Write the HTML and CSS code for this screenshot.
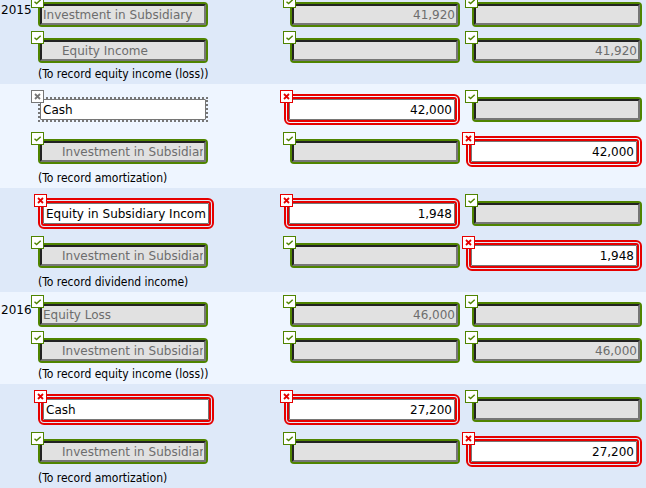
FILE: index.html
```html
<!DOCTYPE html>
<html lang="en">
<head>
  <meta charset="UTF-8" />
  <meta name="viewport" content="width=device-width, initial-scale=1.0" />
  <title>Journal Entries</title>
  <link rel="stylesheet" href="styles.css">
</head>
<body>
  <svg class="icons" aria-hidden="true">
    <symbol id="check" viewBox="0 0 11 11"><path d="M2.5 5.7 L4.6 7.6 L8.7 3.7" fill="none" stroke="currentColor" stroke-width="1.4" /></symbol>
    <symbol id="cross" viewBox="0 0 11 11"><path d="M3 3 L8 8 M8 3 L3 8" fill="none" stroke="currentColor" stroke-width="1.8" /></symbol>
  </svg>

  <table class="journal">
    <colgroup>
      <col class="col-year">
      <col class="col-account">
      <col class="col-amount">
      <col class="col-amount">
    </colgroup>

    <!-- 2015 -->
    <tbody>
      <tr>
        <th scope="row">2015</th>
        <td><span class="field right"><svg class="badge"><use href="#check" /></svg><input type="text" aria-label="Account" value="Investment in Subsidiary" disabled></span></td>
        <td class="amount"><span class="field right"><svg class="badge"><use href="#check" /></svg><input type="text" aria-label="Debit" value="41,920" disabled></span></td>
        <td class="amount"><span class="field right"><svg class="badge"><use href="#check" /></svg><input type="text" aria-label="Credit" disabled></span></td>
      </tr>
      <tr>
        <th></th>
        <td class="indent"><span class="field right"><svg class="badge"><use href="#check" /></svg><input type="text" aria-label="Account" value="Equity Income" disabled></span></td>
        <td class="amount"><span class="field right"><svg class="badge"><use href="#check" /></svg><input type="text" aria-label="Debit" disabled></span></td>
        <td class="amount"><span class="field right"><svg class="badge"><use href="#check" /></svg><input type="text" aria-label="Credit" value="41,920" disabled></span></td>
      </tr>
      <tr class="note">
        <th></th>
        <td colspan="3">(To record equity income (loss))</td>
      </tr>
    </tbody>

    <tbody>
      <tr>
        <th></th>
        <td><span class="field active"><svg class="badge"><use href="#cross" /></svg><input type="text" aria-label="Account" value="Cash"></span></td>
        <td class="amount"><span class="field wrong"><svg class="badge"><use href="#cross" /></svg><input type="text" aria-label="Debit" value="42,000"></span></td>
        <td class="amount"><span class="field right"><svg class="badge"><use href="#check" /></svg><input type="text" aria-label="Credit" disabled></span></td>
      </tr>
      <tr>
        <th></th>
        <td class="indent"><span class="field right"><svg class="badge"><use href="#check" /></svg><input type="text" aria-label="Account" value="Investment in Subsidiary" disabled></span></td>
        <td class="amount"><span class="field right"><svg class="badge"><use href="#check" /></svg><input type="text" aria-label="Debit" disabled></span></td>
        <td class="amount"><span class="field wrong"><svg class="badge"><use href="#cross" /></svg><input type="text" aria-label="Credit" value="42,000"></span></td>
      </tr>
      <tr class="note">
        <th></th>
        <td colspan="3">(To record amortization)</td>
      </tr>
    </tbody>

    <tbody>
      <tr>
        <th></th>
        <td><span class="field wrong"><svg class="badge"><use href="#cross" /></svg><input type="text" aria-label="Account" value="Equity in Subsidiary Income"></span></td>
        <td class="amount"><span class="field wrong"><svg class="badge"><use href="#cross" /></svg><input type="text" aria-label="Debit" value="1,948"></span></td>
        <td class="amount"><span class="field right"><svg class="badge"><use href="#check" /></svg><input type="text" aria-label="Credit" disabled></span></td>
      </tr>
      <tr>
        <th></th>
        <td class="indent"><span class="field right"><svg class="badge"><use href="#check" /></svg><input type="text" aria-label="Account" value="Investment in Subsidiary" disabled></span></td>
        <td class="amount"><span class="field right"><svg class="badge"><use href="#check" /></svg><input type="text" aria-label="Debit" disabled></span></td>
        <td class="amount"><span class="field wrong"><svg class="badge"><use href="#cross" /></svg><input type="text" aria-label="Credit" value="1,948"></span></td>
      </tr>
      <tr class="note">
        <th></th>
        <td colspan="3">(To record dividend income)</td>
      </tr>
    </tbody>

    <!-- 2016 -->
    <tbody>
      <tr>
        <th scope="row">2016</th>
        <td><span class="field right"><svg class="badge"><use href="#check" /></svg><input type="text" aria-label="Account" value="Equity Loss" disabled></span></td>
        <td class="amount"><span class="field right"><svg class="badge"><use href="#check" /></svg><input type="text" aria-label="Debit" value="46,000" disabled></span></td>
        <td class="amount"><span class="field right"><svg class="badge"><use href="#check" /></svg><input type="text" aria-label="Credit" disabled></span></td>
      </tr>
      <tr>
        <th></th>
        <td class="indent"><span class="field right"><svg class="badge"><use href="#check" /></svg><input type="text" aria-label="Account" value="Investment in Subsidiary" disabled></span></td>
        <td class="amount"><span class="field right"><svg class="badge"><use href="#check" /></svg><input type="text" aria-label="Debit" disabled></span></td>
        <td class="amount"><span class="field right"><svg class="badge"><use href="#check" /></svg><input type="text" aria-label="Credit" value="46,000" disabled></span></td>
      </tr>
      <tr class="note">
        <th></th>
        <td colspan="3">(To record equity income (loss))</td>
      </tr>
    </tbody>

    <tbody>
      <tr>
        <th></th>
        <td><span class="field wrong"><svg class="badge"><use href="#cross" /></svg><input type="text" aria-label="Account" value="Cash"></span></td>
        <td class="amount"><span class="field wrong"><svg class="badge"><use href="#cross" /></svg><input type="text" aria-label="Debit" value="27,200"></span></td>
        <td class="amount"><span class="field right"><svg class="badge"><use href="#check" /></svg><input type="text" aria-label="Credit" disabled></span></td>
      </tr>
      <tr>
        <th></th>
        <td class="indent"><span class="field right"><svg class="badge"><use href="#check" /></svg><input type="text" aria-label="Account" value="Investment in Subsidiary" disabled></span></td>
        <td class="amount"><span class="field right"><svg class="badge"><use href="#check" /></svg><input type="text" aria-label="Debit" disabled></span></td>
        <td class="amount"><span class="field wrong"><svg class="badge"><use href="#cross" /></svg><input type="text" aria-label="Credit" value="27,200"></span></td>
      </tr>
      <tr class="note">
        <th></th>
        <td colspan="3">(To record amortization)</td>
      </tr>
    </tbody>
  </table>
</body>
</html>
```
FILE: styles.css
```css
:root {
  --band-dark: #dee9f9;
  --band-light: #eef5ff;
  --right-color: #4f8400;
  --wrong-color: #e60000;
  --gray: #767676;
}

* {
  box-sizing: border-box;
}

body {
  margin: 0;
  font-family: "DejaVu Sans", Verdana, sans-serif;
  font-size: 12px;
  color: #000;
  overflow: hidden;
}

.icons {
  display: none;
}

.journal {
  width: 100%;
  margin-top: -8px;
  border-collapse: collapse;
  table-layout: fixed;
}

.col-year {
  width: 38px;
}

.col-amount {
  width: 182px;
}

tbody:nth-of-type(odd) {
  background: var(--band-dark);
}

tbody:nth-of-type(even) {
  background: var(--band-light);
}

th {
  padding: 0 0 0 1px;
  font-weight: normal;
  text-align: left;
}

td {
  padding: 10px 4px 1px 0;
  vertical-align: middle;
}

.amount .field {
  margin-left: auto;
}

.amount input {
  text-align: right;
}

.indent input {
  padding-left: 20px;
}

.note td {
  height: 20px;
  padding: 0;
  font-family: "DejaVu Sans Condensed", Tahoma, sans-serif;
  line-height: 20px;
}

.field {
  display: block;
  position: relative;
  width: 170px;
}

input {
  display: block;
  width: 100%;
  height: 21px;
  margin: 0;
  padding: 0 1px;
  border: 2px solid var(--gray);
  border-radius: 1px;
  outline: none;
  background: #fff;
  font: inherit;
  font-size: 12px;
  color: #000;
}

input:disabled {
  background: #e1e1e1;
  border-color: #222 var(--gray) var(--gray) #222;
  color: #6d6d6d;
}

/* badge in the corner of each field */
.badge {
  position: absolute;
  top: -9px;
  left: -9px;
  width: 13px;
  height: 13px;
  border: 1px solid currentColor;
  background: #fff;
}

.right {
  border: 2px solid var(--right-color);
  border-radius: 4px;
}

.right .badge {
  color: var(--right-color);
}

.wrong {
  width: 176px;
  border: 5px double var(--wrong-color);
  border-radius: 6px;
}

.wrong .badge {
  color: var(--wrong-color);
}

.wrong input,
.active input {
  padding: 0 2px;
  border-width: 1px;
}

.active {
  border: 2px dotted var(--gray);
}

.active .badge {
  color: var(--gray);
}
```
